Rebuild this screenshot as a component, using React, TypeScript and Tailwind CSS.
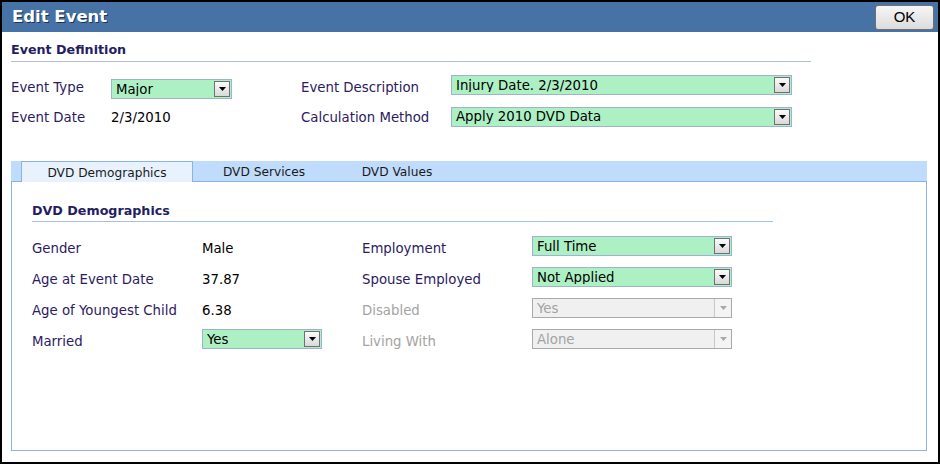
import React from "react"

const font = { fontFamily: '"DejaVu Sans", Verdana, sans-serif' }

type SelectProps = {
  value: string
  width: string
  disabled?: boolean
  className?: string
}

function Select({ value, width, disabled, className = "" }: SelectProps) {
  if (disabled) {
    return (
      <div
        className={`flex h-[20px] items-center border border-[#a9a9a9] bg-[#f0f0f0] ${width} ${className}`}
      >
        <span className="flex-1 truncate pl-[4px] pt-[1px] text-[13.3px] leading-none text-[#a3a3a3]">{value}</span>
        <div className="flex h-[18px] w-[17px] items-center justify-center border-l border-[#c8c8c8] bg-[#f4f4f4]">
          <svg width="7" height="4" viewBox="0 0 7 4">
            <path d="M0 0h7L3.5 4z" fill="#a8a8a8" />
          </svg>
        </div>
      </div>
    )
  }
  return (
    <div
      className={`flex h-[20px] items-center border border-[#9db3d3] bg-[#adf0c4] ${width} ${className}`}
    >
      <span className="flex-1 truncate pl-[4px] pt-[1px] text-[13.3px] leading-none text-black">{value}</span>
      <div className="mr-[1px] flex h-[16px] w-[16px] items-center justify-center border border-[#707070] bg-gradient-to-b from-[#fbfbfb] to-[#d9d9d9]">
        <svg width="7" height="4" viewBox="0 0 7 4">
          <path d="M0 0h7L3.5 4z" fill="#000" />
        </svg>
      </div>
    </div>
  )
}

function Label({ children, muted }: { children: React.ReactNode; muted?: boolean }) {
  return (
    <span className={`pt-[2px] text-[13.3px] leading-none ${muted ? "text-[#a3a3a3]" : "text-[#2c1a62]"}`}>
      {children}
    </span>
  )
}

export default function App() {
  return (
    <div className="h-[464px] w-[940px] overflow-hidden bg-white" style={font}>
      <div className="flex h-[464px] w-[940px] flex-col border-2 border-black">
        {/* title bar */}
        <div className="flex h-[30px] shrink-0 items-center justify-between bg-[#4672a5] pl-[10px] pr-[4px]">
          <span className="text-[16.5px] font-bold text-white [text-shadow:1px_1px_0_#1d3658]">Edit Event</span>
          <button
            className="h-[25px] w-[59px] rounded-[3px] border border-[#707070] bg-gradient-to-b from-[#f6f6f6] to-[#dcdcdc] text-[15px] text-black"
            style={{ fontFamily: '"Liberation Sans", Arial, sans-serif' }}
          >
            OK
          </button>
        </div>

        <div className="flex flex-1 flex-col pl-[9px] pr-[10px]">
          {/* event definition */}
          <div className="mt-[10px] w-[800px] border-b border-[#b4c0d9] pb-[3px]">
            <span className="block h-[16px] text-[12.7px] font-bold leading-[16px] text-[#231e5f]">
              Event Definition
            </span>
          </div>

          <div className="mt-[13px] flex h-[24px]">
            <div className="flex w-[100px] items-center">
              <Label>Event Type</Label>
            </div>
            <Select value="Major" width="w-[121px]" className="self-end" />
            <div className="ml-[69px] flex w-[150px] items-center">
              <Label>Event Description</Label>
            </div>
            <Select value="Injury Date. 2/3/2010" width="w-[341px]" className="self-start" />
          </div>

          <div className="mt-[7px] flex h-[21px] items-center">
            <div className="flex w-[100px] items-center">
              <Label>Event Date</Label>
            </div>
            <span className="w-[121px] pt-[2px] text-[13.3px] leading-none text-black">2/3/2010</span>
            <div className="ml-[69px] flex w-[150px] items-center">
              <Label>Calculation Method</Label>
            </div>
            <Select value="Apply 2010 DVD Data" width="w-[341px]" />
          </div>

          {/* tabs */}
          <div className="mt-[34px] flex h-[21px] w-[916px] items-end border-b border-[#8ab2e4] bg-[#c0dcfc]">
            <div className="ml-[10px] -mb-px flex h-[21px] w-[172px] items-center justify-center border-x border-t border-[#8ab2e4] bg-[#e8f2fc] pt-[3px] text-[12.2px] text-[#1a1a1a]">
              DVD Demographics
            </div>
            <div className="flex h-[20px] w-[142px] items-center justify-center pt-[3px] text-[12.2px] text-[#1a1a1a]">
              DVD Services
            </div>
            <div className="flex h-[20px] w-[124px] items-center justify-center pt-[3px] text-[12.2px] text-[#1a1a1a]">
              DVD Values
            </div>
          </div>

          <div className="flex h-[269px] w-[916px] flex-col border-x border-b border-[#8ab2e4] pl-[20px]">
            <div className="mt-[21px] w-[741px] border-b border-[#a2c0ea] pb-[2px]">
              <span className="block h-[16px] text-[12.7px] font-bold leading-[16px] text-[#231e5f]">
                DVD Demographics
              </span>
            </div>

            <div className="mt-[10px] flex flex-col">
              <div className="flex h-[31px] items-center">
                <div className="w-[170px]"><Label>Gender</Label></div>
                <span className="w-[160px] pt-[2px] text-[13.3px] leading-none text-black">Male</span>
                <div className="w-[170px]"><Label>Employment</Label></div>
                <Select value="Full Time" width="w-[200px]" className="-mt-[3px]" />
              </div>
              <div className="flex h-[31px] items-center">
                <div className="w-[170px]"><Label>Age at Event Date</Label></div>
                <span className="w-[160px] pt-[2px] text-[13.3px] leading-none text-black">37.87</span>
                <div className="w-[170px]"><Label>Spouse Employed</Label></div>
                <Select value="Not Applied" width="w-[200px]" className="-mt-[3px]" />
              </div>
              <div className="flex h-[31px] items-center">
                <div className="w-[170px]"><Label>Age of Youngest Child</Label></div>
                <span className="w-[160px] pt-[2px] text-[13.3px] leading-none text-black">6.38</span>
                <div className="w-[170px]"><Label muted>Disabled</Label></div>
                <Select value="Yes" width="w-[200px]" disabled className="-mt-[3px]" />
              </div>
              <div className="flex h-[31px] items-center">
                <div className="w-[170px]"><Label>Married</Label></div>
                <div className="w-[160px]">
                  <Select value="Yes" width="w-[120px]" className="-mt-[3px]" />
                </div>
                <div className="w-[170px]"><Label muted>Living With</Label></div>
                <Select value="Alone" width="w-[200px]" disabled className="-mt-[3px]" />
              </div>
            </div>
          </div>
        </div>
      </div>
    </div>
  )
}
